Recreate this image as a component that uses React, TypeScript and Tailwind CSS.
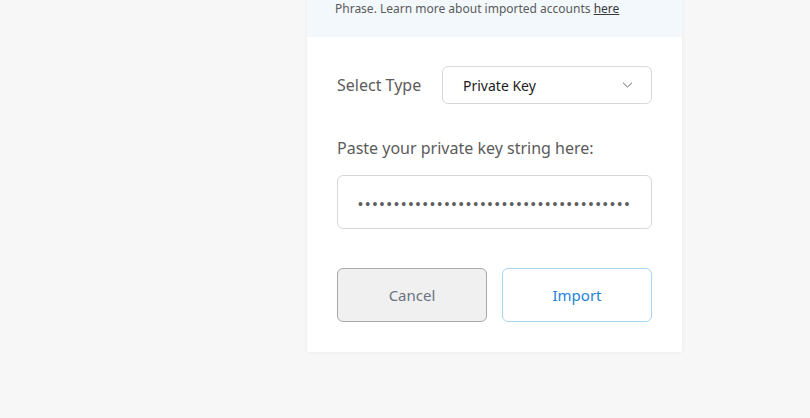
import React from "react";

export default function App() {
  const dots = "•".repeat(38);
  return (
    <div
      className="w-[810px] h-[418px] bg-[#f7f7f7] overflow-hidden"
      style={{ fontFamily: '"Noto Sans", Inter, sans-serif' }}
    >
      <div className="ml-[307px] w-[375px] bg-white shadow-[0_0_4px_rgba(0,0,0,0.06)] flex flex-col">
        <div className="bg-[#f2f8fc] h-[37px] pl-[28px] pt-[0px] text-[12px] leading-[17px] text-[#5a5a5a]">
          Phrase. Learn more about imported accounts{" "}
          <span className="underline text-[#3a3a3a]">here</span>
        </div>
        <div className="px-[30px] pt-[29px] pb-[30px] flex flex-col">
          <div className="flex items-center">
            <div className="w-[105px] text-[16px] text-[#5b5b5b]">Select Type</div>
            <div className="flex-1 h-[38px] border border-[#d8d8dc] rounded-[6px] flex items-center justify-between pl-[20px] pr-[18px]">
              <span className="text-[14px] text-[#1c1c1c]">Private Key</span>
              <svg width="11" height="6" viewBox="0 0 11 6" fill="none">
                <path d="M1 0.7L5.5 5L10 0.7" stroke="#6a6a6a" strokeWidth="1" />
              </svg>
            </div>
          </div>
          <div className="mt-[33px] text-[16px] text-[#5b5b5b] leading-[22px]">
            Paste your private key string here:
          </div>
          <div className="mt-[16px] h-[54px] border border-[#d8d8dc] rounded-[6px] flex items-center pl-[20px] pt-[3px] overflow-hidden">
            <span
              className="text-[14px] tracking-[2.3px] text-[#5f5f5f] whitespace-nowrap leading-none"
              style={{ fontFamily: '"Liberation Sans", Arial, sans-serif' }}
            >
              {dots}
            </span>
          </div>
          <div className="mt-[39px] flex gap-[15px]">
            <button className="w-[150px] h-[54px] rounded-[6px] bg-[#f0f0f0] border border-[#a9a9a9] text-[15px] text-[#6a737d]">
              Cancel
            </button>
            <button className="w-[150px] h-[54px] rounded-[6px] bg-white border border-[#a8d5f2] text-[15px] text-[#2384d8]">
              Import
            </button>
          </div>
        </div>
      </div>
    </div>
  );
}
